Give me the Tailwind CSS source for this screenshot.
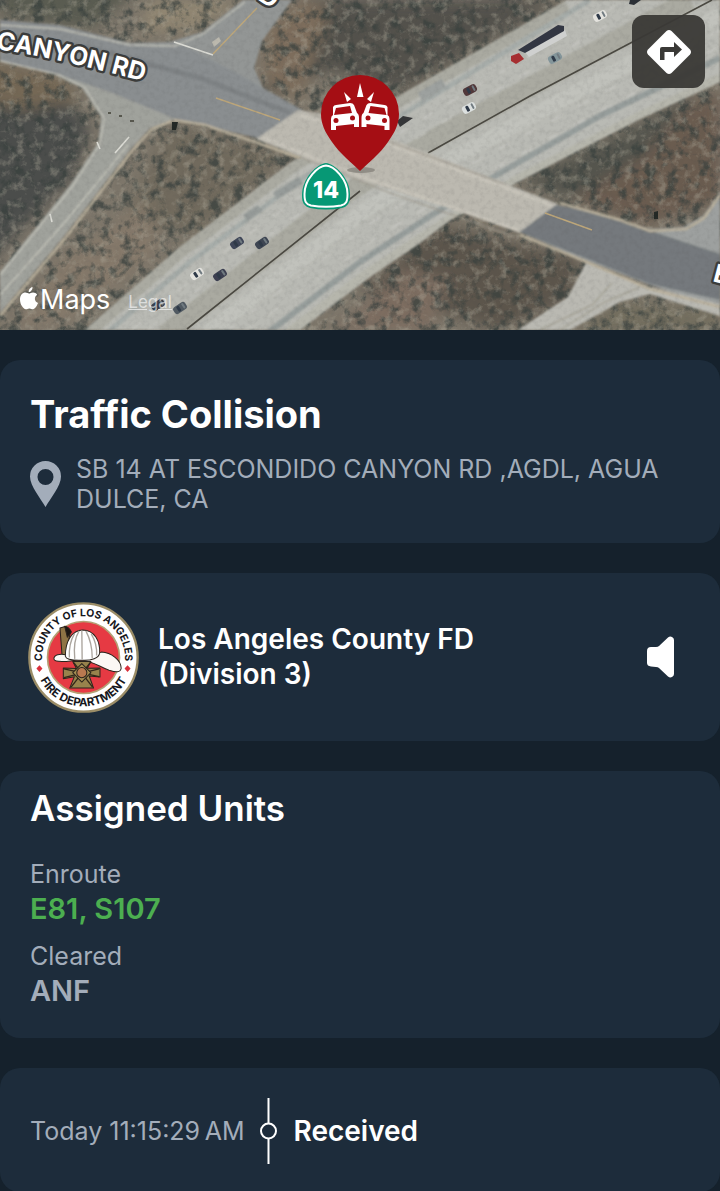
<!DOCTYPE html>
<html lang="en">
<head>
  <meta charset="UTF-8">
  <meta name="viewport" content="width=device-width, initial-scale=1.0">
  <title>Traffic Collision</title>
  <script src="https://cdn.jsdelivr.net/npm/@tailwindcss/browser@4"></script>
</head>
<body class="bg-[#15212c] font-[Inter,sans-serif] text-white overflow-x-hidden">

  <!-- Map -->
  <section class="relative h-[330px] overflow-hidden" aria-label="Incident map">
    <svg class="block w-full h-full" viewBox="0 0 720 330" preserveAspectRatio="xMidYMid slice">
      <defs>
        <filter id="darkScrub" x="0" y="0" width="100%" height="100%" color-interpolation-filters="sRGB">
          <feTurbulence type="fractalNoise" baseFrequency="0.09" numOctaves="5" seed="4" />
          <feColorMatrix values="0 0 0 0 0.22  0 0 0 0 0.25  0 0 0 0 0.24  3.6 0 0 0 -1.7" />
        </filter>
        <filter id="lightScrub" x="0" y="0" width="100%" height="100%" color-interpolation-filters="sRGB">
          <feTurbulence type="fractalNoise" baseFrequency="0.12" numOctaves="5" seed="19" />
          <feColorMatrix values="0 0 0 0 0.68  0 0 0 0 0.66  0 0 0 0 0.60  0 3.4 0 0 -1.7" />
        </filter>
        <filter id="grain" x="0" y="0" width="100%" height="100%" color-interpolation-filters="sRGB">
          <feTurbulence type="fractalNoise" baseFrequency="0.2" numOctaves="3" seed="8" />
          <feColorMatrix values="0 0 0 0 0.3  0 0 0 0 0.3  0 0 0 0 0.3  1.2 0 0 0 -0.5" />
        </filter>
        <filter id="soft"><feGaussianBlur stdDeviation="7" /></filter>
        <filter id="edge"><feGaussianBlur stdDeviation="1" /></filter>
        <clipPath id="freewayClip">
          <path d="M85 330L180 247L290 163L397 97L567 0H720V82L640 119L560 160L516 183L450 220L420 243L370 277L300 330Z" />
        </clipPath>
        <g id="car">
          <rect x="-7" y="-4" width="14" height="8" rx="3" />
          <rect x="-3" y="-3" width="3" height="6" rx="1" fill="#2f3a48" />
          <rect x="3" y="-3" width="2" height="6" rx="1" fill="#707a80" />
        </g>
      </defs>

      <!-- Ground -->
      <rect width="720" height="330" fill="#7d766a" />
      <g filter="url(#soft)">
        <path d="M-20 60L60 90L90 130L70 180L-20 270Z" fill="#4b4d4c" />
        <path d="M-20 60L60 75L80 100L20 110L-20 100Z" fill="#746855" />
        <path d="M0 -20H150L90 30L0 15Z" fill="#5a5b51" />
        <path d="M150 0H240L200 30L140 32Z" fill="#918672" />
        <path d="M170 125L290 155L200 230L120 225Z" fill="#716b5d" />
        <path d="M60 260L150 200L160 250L70 320L10 330Z" fill="#85796b" />
        <path d="M300 0H560L400 90L330 70L260 100Z" fill="#53514b" />
        <path d="M265 30L300 0L330 10L300 100L265 80Z" fill="#7d6d5b" />
        <path d="M530 185L720 90V200L650 225Z" fill="#6a5c50" />
        <path d="M520 180L640 125L700 90L640 160L570 200Z" fill="#54544d" />
        <path d="M440 225L580 260L570 300L500 330L360 290Z" fill="#5b544b" />
        <path d="M360 310L400 270L450 280L430 330H330Z" fill="#7d6d60" />
        <path d="M570 335L620 300L720 310V330Z" fill="#736e5f" />
      </g>
      <rect width="720" height="330" filter="url(#darkScrub)" opacity=".75" />
      <rect width="720" height="330" filter="url(#lightScrub)" opacity=".4" />

      <!-- Freeway -->
      <g filter="url(#edge)">
        <path d="M85 330L180 247L290 163L397 97L567 0H720V82L640 119L560 160L516 183L450 220L420 243L370 277L300 330Z" fill="#b9bab4" />
        <g clip-path="url(#freewayClip)" fill="none">
          <path d="M85 335L180 252L290 168L397 102L567 5" stroke="#aaaaa1" stroke-width="13" />
          <path d="M108 332L190 262L300 180L410 110L590 0" stroke="#a6aca9" stroke-width="5" />
          <path d="M165 335L348 192L436 138L690 0" stroke="#aaaaa1" stroke-width="20" />
          <path d="M205 335L365 210L450 160L720 15" stroke="#c1c2bc" stroke-width="15" />
          <path d="M265 335L360 262L435 213L500 173L600 116L720 58" stroke="#969d9b" stroke-width="6" />
          <path d="M285 335L365 275L445 222L520 178L640 116L725 76" stroke="#b6b6ac" stroke-width="9" />
          <path d="M132 330L220 255L320 182L440 108L625 0M148 330L235 260L335 188L455 115L650 0M225 332L375 220L460 170L720 30M244 332L385 232L470 182L720 46" stroke="#d0d0cb" stroke-width="1" stroke-dasharray="12 18" />
          <path d="M245 218l15 -10M275 196l26 -16" stroke="#969b99" stroke-width="8" />
          <path d="M420 97l24 -14" stroke="#9da19f" stroke-width="10" />
        </g>
      </g>
      <path d="M187 329L360 191M428 153L530 96L712 0" stroke="#4a4841" stroke-width="1.6" fill="none" />

      <!-- Local roads and ramps -->
      <g filter="url(#edge)">
        <path d="M55 75L82 88L101 117L98 143L70 185L0 272V313L65 235L130 150L150 128L176 119L260 137L100 75Z" fill="#a0a29c" />
        <path d="M128 43L170 42L202 32L243 0H292L262 41L254 68L263 88L282 104L304 112L180 85Z" fill="#939695" />
        <path d="M0 20L60 25L130 43L180 44L240 75L304 111L258 138L176 119L110 92L60 75L0 61Z" fill="#8a8e90" />
        <path d="M0 35L90 48L200 78L290 113" stroke="#7e8284" stroke-width="5" fill="none" />
        <path d="M298 110L330 115L400 142L558 204L520 233L455 210L360 180L256 139Z" fill="#bcb9b0" />
        <path d="M300 115L395 147L556 207M262 137L360 176L518 230" stroke="#c8c4ba" stroke-width="3" fill="none" />
        <path d="M309 113L395 144L505 184M290 153L390 193L515 237" stroke="#9d978b" stroke-width="1" fill="none" />
        <path d="M556 205L598 213L650 229L684 227L703 216L720 192V305L680 295L650 285L575 256L520 232Z" fill="#9da09f" />
        <path d="M556 205L600 214L720 254V300L650 284L580 256L520 232Z" fill="#75797d" />
        <path d="M586 263L650 287L720 304V316L675 302L650 294L620 302L570 330H518L568 297Z" fill="#bab9b2" />
        <path d="M612 283L592 305L540 330M640 287L605 302L560 330" stroke="#a9a79c" stroke-width="2" fill="none" />
        <path d="M0 25L60 29L130 45L175 46L203 34L245 2M0 61L60 75L85 88L104 118L100 144L72 187L0 275M0 295L65 222L128 145" stroke="#c4c4ba" stroke-width="1.3" fill="none" />
        <path d="M174 120L205 125L258 143L300 158M0 316L67 236L132 151L152 129L172 121M520 235L582 260L650 289L720 307M560 203L620 220L650 231L686 229L704 218L720 195" stroke="#b9b09c" stroke-width="2.5" fill="none" />
      </g>
      <path d="M216 98L280 120M213 54L257 8M545 213L592 230" stroke="#bea77a" stroke-width="1.4" fill="none" />
      <path d="M174 42L213 55M115 153L129 137M97 142L100 149M50 214L52 222" stroke="#dcdcd5" stroke-width="1.6" fill="none" />
      <path d="M212 42l7 -5 2 4 -7 6Z" fill="#bcb9ae" />
      <path d="M108 113h3M119 116h3M130 121h4" stroke="#58584e" stroke-width="2" />
      <path d="M397 121l6 -5 10 2 -13 9Z" fill="#343537" />
      <path d="M172 122l6 0 -2 8 -4 0ZM654 219l0 -7 4 -1v8Z" fill="#232825" />
      <rect width="720" height="330" filter="url(#grain)" opacity=".2" />

      <!-- Vehicles -->
      <use href="#car" transform="translate(237 243) rotate(-34)" fill="#3f4658" />
      <use href="#car" transform="translate(262 243) rotate(-34)" fill="#3d4552" />
      <use href="#car" transform="translate(197 274) rotate(-34)" fill="#e4e3de" />
      <use href="#car" transform="translate(220 275) rotate(-34)" fill="#3c3f50" />
      <use href="#car" transform="translate(158 305) rotate(-34)" fill="#393f4a" />
      <use href="#car" transform="translate(180 308) rotate(-34)" fill="#505961" />
      <use href="#car" transform="translate(470 90) rotate(-28)" fill="#51383a" />
      <use href="#car" transform="translate(469 108) rotate(-28)" fill="#dce0df" />
      <use href="#car" transform="translate(555 58) rotate(-28)" fill="#83959a" />
      <use href="#car" transform="translate(600 16) rotate(-28)" fill="#e4e3de" />
      <path d="M630 0h11l-7 5 -5 -1Z" fill="#2b3036" />
      <path d="M525 52L565 30L567 36L529 57Z" fill="#cfd0cf" />
      <path d="M518 50L558 25L564 26L564 31L525 53Z" fill="#333743" />
      <path d="M511 56l8 -3 5 6 -8 5 -5 -3Z" fill="#a62e30" />

      <!-- Road names -->
      <g class="text-[25px] font-bold" fill="#fff" stroke="#3b3c3b" stroke-width="5" stroke-linejoin="round" paint-order="stroke">
        <path id="canyon" d="M-4 49Q70 60 170 89" fill="none" stroke="none" />
        <text><textPath href="#canyon">CANYON RD</textPath></text>
        <text x="712" y="281" transform="rotate(15 712 281)">E</text>
        <text x="257" y="-1" transform="rotate(35 257 -1)">D</text>
      </g>

      <!-- Route 14 shield -->
      <path d="M326 163C335 164 350 178 350 195C350 203 348 206 342 208Q326 211 310 208C304 206 302 203 302 195C302 178 317 164 326 163Z" fill="#079875" />
      <path d="M326 165.500C334 166 347.500 179 347.500 194C347.500 202 346 204 341 205.500Q326 208 311 205.500C306 204 304.500 202 304.500 194C304.500 179 318 166 326 165.500Z" fill="#079875" stroke="#fff" stroke-width="2" />
      <text x="326" y="198" text-anchor="middle" class="text-[23px] font-extrabold" fill="#fff">14</text>

      <!-- Incident pin -->
      <ellipse cx="361" cy="170" rx="14" ry="3" fill="#77736d" opacity=".6" />
      <path d="M360 171C352 163 340 154 332 142C325 132 321 124 321 114A39 39 0 0 1 399 114C399 124 395 132 388 142C380 154 368 163 360 171Z" fill="#a50e14" />
      <g fill="#fff">
        <path d="M360 83L363.500 97H357ZM344 92L351 99L347 102ZM374 92L371 102L367 99Z" />
        <g id="pinCar">
          <path d="M333 107Q334 105 336 105L350 103Q353 103 354 105L357 113Q359 114 359 118V127H354V124L336 126V130H331V119Q331 116 333 115Z" />
          <path d="M336 108L350 106L352 113L334 115Z" fill="#a50e14" />
          <circle cx="336" cy="120.500" r="2.500" fill="#a50e14" />
          <circle cx="352.500" cy="118" r="2.500" fill="#a50e14" />
        </g>
        <use href="#pinCar" transform="matrix(-1 0 0 1 720.500 0)" />
      </g>
    </svg>

    <button type="button" aria-label="Directions" class="absolute top-[15px] right-[15px] size-[73px] rounded-xl bg-[#3a3936]/95 flex items-center justify-center">
      <svg class="size-[46px]" viewBox="0 0 46 46">
        <path d="M20.500 2Q23 0 25.500 2L44 20.500Q46 23 44 25.500L25.500 44Q23 46 20.500 44L2 25.500Q0 23 2 20.500Z" fill="#fff" />
        <path d="M14 31V20Q14 18 16 18H28V13L36 20.500L28 28V23H18.500V31Z" fill="#3a3936" />
      </svg>
    </button>

    <div class="absolute left-5 bottom-3 flex items-center gap-[18px]">
      <span class="flex items-center gap-[2px] text-[27px] leading-9">
        <svg class="w-[18px] h-[23px] mb-1" viewBox="0 0 18 23" fill="#fff">
          <path d="M12.500 0C12.700 2.800 10.500 5.200 8.700 5.100C8.400 2.600 10.500 .4 12.500 0ZM9 6.600C10 6.600 11 5.500 13 5.500C14.700 5.500 16.300 6.400 17.200 7.800C13.700 10 14.300 14.600 18 16.100C17 18.800 15 22.300 12.900 22.300C11.500 22.300 11 21.400 9.300 21.400C7.600 21.400 7 22.300 5.800 22.300C3.200 22.300 0 17.300 0 12.600C0 8.100 2.700 5.600 5.400 5.600C7 5.600 8.200 6.600 9 6.600Z" />
        </svg>
        Maps
      </span>
      <a href="#" class="mt-1 text-[17px] leading-6 text-white/60 underline">Legal</a>
    </div>
  </section>

  <main class="pt-[30px] flex flex-col gap-[30px]">

    <!-- Incident -->
    <section class="bg-[#1d2c3b] rounded-[20px] px-[30px] pt-[30px] pb-[29px]">
      <h1 class="text-[38px] leading-[48px] font-bold">Traffic Collision</h1>
      <div class="mt-4 flex items-center gap-[15px] text-[#a3adba]">
        <svg class="w-[31px] h-[46px] shrink-0" viewBox="0 0 31 46" fill="currentColor" fill-rule="evenodd">
          <path d="M15.500 0A15.500 15.500 0 0 1 31 15.500C31 25 20 38 15.500 46C11 38 0 25 0 15.500A15.500 15.500 0 0 1 15.500 0ZM15.500 8A8 8 0 1 0 15.500 24A8 8 0 1 0 15.500 8Z" />
        </svg>
        <p class="text-[25px] leading-[30px]">SB 14 AT ESCONDIDO CANYON RD ,AGDL, AGUA DULCE, CA</p>
      </div>
    </section>

    <!-- Agency -->
    <section class="bg-[#1d2c3b] rounded-[20px] h-[168px] pl-[28px] pr-[46px] flex items-center gap-[19px]">
      <svg class="size-[111px] shrink-0" viewBox="0 0 330 330" role="img" aria-label="Los Angeles County Fire Department seal">
        <defs>
          <path id="sealTop" d="M60 229A123 123 0 1 1 270 229" />
          <path id="sealBottom" d="M20 165A145 145 0 0 0 310 165" />
        </defs>
        <circle cx="165" cy="165" r="161" fill="#fff" stroke="#9b8d67" stroke-width="7" />
        <circle cx="165" cy="165" r="107" fill="#e63a43" stroke="#b4a074" stroke-width="5" />
        <g class="font-bold" fill="#16171c" text-anchor="middle">
          <text class="text-[31px]"><textPath href="#sealTop" startOffset="50%">COUNTY OF LOS ANGELES</textPath></text>
          <text class="text-[34px]"><textPath href="#sealBottom" startOffset="50%">FIRE DEPARTMENT</textPath></text>
        </g>
        <path d="M34 188L43 198L34 208L25 198ZM296 188L305 198L296 208L287 198Z" fill="#d9303c" />
        <g transform="translate(-27 -35)" stroke="#2a231c" stroke-width="3" stroke-linejoin="round">
          <path d="M122 112L138 108L152 128L140 190L134 208L128 190Z" fill="#8e7445" />
          <path d="M136 107Q148 108 156 124L144 140Z" fill="#1b1613" />
          <path d="M104 204C104 192 122 188 140 192C185 205 220 194 245 184C275 186 304 208 304 232C302 246 288 244 268 238C240 228 222 212 190 208C165 205 145 214 128 212C112 212 104 210 104 204Z" fill="#fbf8f4" />
          <path d="M138 196C138 150 158 119 190 118C224 119 242 150 240 187C238 202 215 209 190 208C165 209 140 206 138 196Z" fill="#fff" />
          <path d="M187 119L188 206M179 121C164 145 163 175 166 204M199 121C212 145 218 175 218 202M165 130C151 153 149 180 150 200M215 130C229 153 232 177 231 194" fill="none" stroke="#aaa49d" stroke-width="4" />
          <path d="M160 212L214 212L203 232L241 231V258L209 255L222 291H151L165 257L132 263V231L171 233Z" fill="#98834c" />
          <path d="M134 234L238 257M238 234L134 260M155 288L212 215M219 288L163 215" fill="none" stroke="#332719" stroke-width="4" />
          <path d="M187 218L214 245L187 273L160 245Z" fill="#a58e52" />
          <circle cx="187" cy="245" r="15" fill="#ba7950" />
        </g>
      </svg>
      <h2 class="flex-1 text-[28px] leading-[35px] font-semibold">Los Angeles County FD<br>(Division 3)</h2>
      <button type="button" aria-label="Play radio audio">
        <svg class="w-[27px] h-[42px]" viewBox="0 0 27 42" fill="#fff">
          <path d="M4 11H9Q11 11 12 10L21 1.500Q23 0 25 1Q27 2 27 4V38Q27 40 25 41Q23 42 21 40.500L12 32Q11 31 9 31L4 30.500Q0 30 0 27V15Q0 11 4 11Z" />
        </svg>
      </button>
    </section>

    <!-- Units -->
    <section class="bg-[#1d2c3b] rounded-[20px] px-[30px] pt-4 pb-[27px]">
      <h2 class="text-[35px] leading-[42px] font-semibold">Assigned Units</h2>
      <dl class="mt-[30px] text-[25px] leading-[30px] text-[#a3adba]">
        <dt>Enroute</dt>
        <dd class="text-[29px] leading-[40px] font-semibold text-[#4caf50]">E81, S107</dd>
        <dt class="mt-3">Cleared</dt>
        <dd class="text-[29px] leading-[40px] font-semibold">ANF</dd>
      </dl>
    </section>

    <!-- Timeline -->
    <section class="bg-[#1d2c3b] rounded-[20px] h-[124px] px-[30px] pt-[30px]">
      <ol>
        <li class="flex items-center">
          <time class="text-[25px] leading-[30px] text-[#a3adba]">Today 11:15:29&#8201;AM</time>
          <svg class="w-[17px] h-[66px] ml-4 mr-4" viewBox="0 0 17 66" fill="none" stroke="#fff" stroke-width="2">
            <path d="M8.500 0V25.500M8.500 40.500V66" />
            <circle cx="8.500" cy="33" r="7.500" />
          </svg>
          <span class="text-[28px] leading-[35px] font-semibold">Received</span>
        </li>
      </ol>
    </section>

  </main>

</body>
</html>
